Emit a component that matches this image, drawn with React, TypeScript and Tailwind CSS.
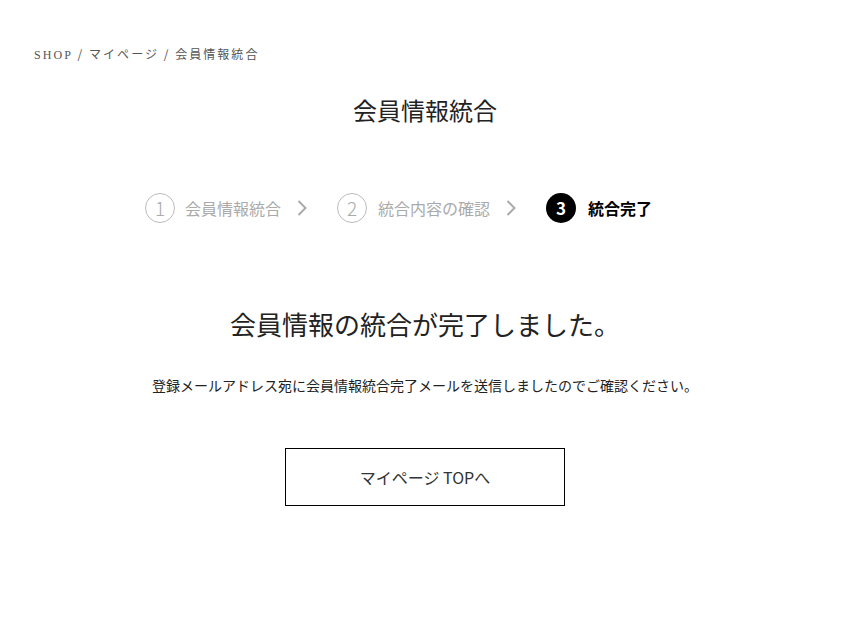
import React from "react";

const jp = { fontFamily: '"Noto Sans CJK JP", "Noto Sans", sans-serif' };

function Chevron() {
  return (
    <svg width="10" height="18" viewBox="0 0 10 18" className="ml-[16px] mr-[30px]">
      <path d="M1.5 2 L8.5 9 L1.5 16" fill="none" stroke="#aaaaaa" strokeWidth="2" />
    </svg>
  );
}

export default function App() {
  return (
    <div className="w-[850px] h-[620px] bg-white text-[#222]" style={jp}>
      <div className="pl-[34px] pt-[45px] text-[12px] tracking-[0.17em] text-[#555] leading-[18px]">
        <span style={{ fontFamily: '"Liberation Serif", serif' }}>SHOP</span>
        <span> / マイページ / 会員情報統合</span>
      </div>
      <h1 className="mt-[28px] text-center text-[24px] leading-[36px] text-[#222]">会員情報統合</h1>
      <div className="mt-[64px] flex items-center pl-[145px] h-[32px]">
        <div className="flex items-center">
          <div className="w-[30px] h-[30px] rounded-full border border-[#bbb] flex items-center justify-center text-[#aaa] text-[19px] font-light">1</div>
          <span className="ml-[10px] text-[16px] text-[#aaa]">会員情報統合</span>
        </div>
        <Chevron />
        <div className="flex items-center">
          <div className="w-[30px] h-[30px] rounded-full border border-[#bbb] flex items-center justify-center text-[#aaa] text-[19px] font-light">2</div>
          <span className="ml-[11px] text-[16px] text-[#aaa]">統合内容の確認</span>
        </div>
        <Chevron />
        <div className="flex items-center">
          <div className="w-[30px] h-[30px] rounded-full bg-black flex items-center justify-center text-white text-[17px] font-bold">3</div>
          <span className="ml-[12px] text-[16px] font-bold text-black">統合完了</span>
        </div>
      </div>
      <h2 className="mt-[81px] text-center text-[26px] leading-[38px] text-[#222]">会員情報の統合が完了しました。</h2>
      <p className="mt-[32px] text-center text-[14px] leading-[20px] text-[#222]">登録メールアドレス宛に会員情報統合完了メールを送信しましたのでご確認ください。</p>
      <div className="mt-[53px] flex justify-center">
        <button className="w-[280px] h-[58px] border border-black text-[16px] text-[#333] flex items-center justify-center bg-white">マイページ TOPへ</button>
      </div>
    </div>
  );
}
